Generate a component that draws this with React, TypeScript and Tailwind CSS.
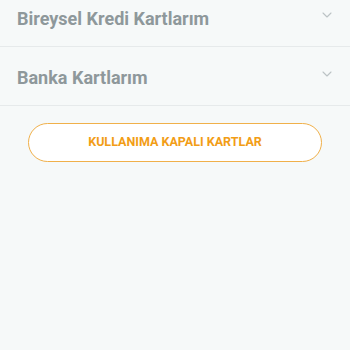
import { ChevronDown } from "lucide-react"

const groups = ["Bireysel Kredi Kartlarım", "Banka Kartlarım"]

export default function App() {
  return (
    <div
      className="h-[350px] w-[350px] overflow-hidden bg-[#f6f9f9]"
      style={{ fontFamily: "Roboto, 'Liberation Sans', sans-serif" }}
    >
      <div className="-mt-[12px]">
        {groups.map((g) => (
          <div
            key={g}
            className="flex h-[59px] items-center justify-between border-b border-[#e6eaeb] pl-[17px] pr-[15px]"
          >
            <span className="mt-[2px] text-[18px] font-bold text-[#8e989b]">{g}</span>
            <ChevronDown className="-mt-[4px] h-[16px] w-[16px] text-[#bcc3c5]" strokeWidth={1.6} />
          </div>
        ))}
      </div>
      <div className="px-[28px] pt-[17px]">
        <button className="flex h-[39px] w-full items-center justify-center rounded-full border border-[#f0b04a] bg-white text-[12.5px] font-bold text-[#f29d16]">
          KULLANIMA KAPALI KARTLAR
        </button>
      </div>
    </div>
  )
}
